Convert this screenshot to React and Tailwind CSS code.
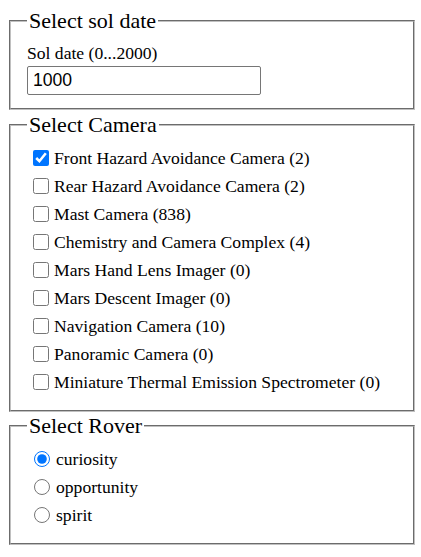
import React, { useState } from 'react';

const cameras = [
    { name: 'Front Hazard Avoidance Camera', count: 2 },
    { name: 'Rear Hazard Avoidance Camera', count: 2 },
    { name: 'Mast Camera', count: 838 },
    { name: 'Chemistry and Camera Complex', count: 4 },
    { name: 'Mars Hand Lens Imager', count: 0 },
    { name: 'Mars Descent Imager', count: 0 },
    { name: 'Navigation Camera', count: 10 },
    { name: 'Panoramic Camera', count: 0 },
    { name: 'Miniature Thermal Emission Spectrometer', count: 0 },
];

const rovers = ['curiosity', 'opportunity', 'spirit'];

const fieldsetCls = 'border-2 [border-style:groove] border-[#c0c0c0] px-4 min-w-0';
const legendCls = 'px-[2px] text-[22px] leading-[25px]';

const App = () => {
    const [sol, setSol] = useState('1000');
    const [checked, setChecked] = useState({ 'Front Hazard Avoidance Camera': true });
    const [rover, setRover] = useState('curiosity');

    return (
        <div className="pt-[8px] pl-[9px] pr-[6px] font-['Liberation_Serif'] text-[17.6px] text-black bg-white">
            <fieldset className={`${fieldsetCls} pt-[10px] pb-[13px]`}>
                <legend className={legendCls}>Select sol date</legend>
                <label className="block leading-[20px]" htmlFor="sol">Sol date (0...2000)</label>
                <input
                    id="sol"
                    type="text"
                    value={sol}
                    onChange={(e) => setSol(e.target.value)}
                    className="mt-[3px] block w-[234px] h-[29px] border border-[#767676] rounded-[2px] px-[5px] font-['Liberation_Sans'] text-[17.6px]"
                />
            </fieldset>

            <fieldset className={`${fieldsetCls} mt-[2px] pt-[7px] pb-[14px]`}>
                <legend className={legendCls}>Select Camera</legend>
                {cameras.map((cam) => (
                    <label key={cam.name} className="flex items-center h-7">
                        <input
                            type="checkbox"
                            checked={!!checked[cam.name]}
                            onChange={() => setChecked({ ...checked, [cam.name]: !checked[cam.name] })}
                            className="w-4 h-4 ml-[6px] mr-[5px] accent-[#0075ff]"
                        />
                        <span>{cam.name} ({cam.count})</span>
                    </label>
                ))}
            </fieldset>

            <fieldset className={`${fieldsetCls} mt-[1px] pt-[7px] pb-[14px]`}>
                <legend className={legendCls}>Select Rover</legend>
                {rovers.map((r) => (
                    <label key={r} className="flex items-center h-7">
                        <input
                            type="radio"
                            name="rover"
                            checked={rover === r}
                            onChange={() => setRover(r)}
                            className="w-4 h-4 ml-[7px] mr-[6px] accent-[#0075ff]"
                        />
                        <span>{r}</span>
                    </label>
                ))}
            </fieldset>
        </div>
    );
};

export default App;
